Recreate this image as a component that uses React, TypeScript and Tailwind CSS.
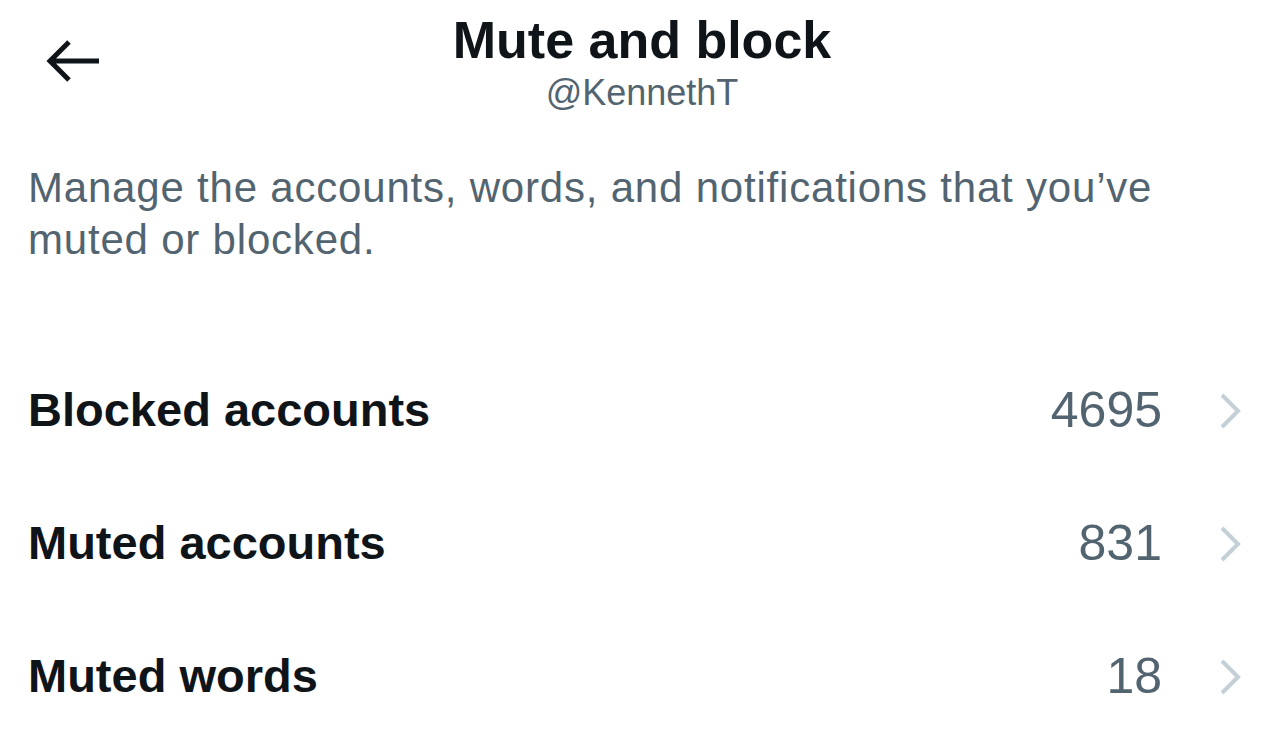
import React from 'react';

const rows = [
  { label: 'Blocked accounts', count: '4695' },
  { label: 'Muted accounts', count: '831' },
  { label: 'Muted words', count: '18' },
];

function BackArrow() {
  return (
    <svg width="56" height="48" viewBox="0 0 56 48" fill="none">
      <path
        d="M25 5 L6 24 L25 43 M6 24 H55"
        stroke="#0f1419"
        strokeWidth="5"
        strokeLinecap="butt"
        strokeLinejoin="miter"
      />
    </svg>
  );
}

function Chevron() {
  return (
    <svg width="26" height="40" viewBox="0 0 26 40" fill="none">
      <path d="M4 4 L20 20 L4 36" stroke="#c4cfd6" strokeWidth="4" />
    </svg>
  );
}

export default function App() {
  return (
    <div
      className="w-[1284px] h-[741px] bg-white overflow-hidden text-[#0f1419]"
      style={{ fontFamily: '"Liberation Sans", Arial, sans-serif' }}
    >
      {/* 헤더 */}
      <div className="relative flex flex-col items-center pt-[10px]">
        <div className="absolute left-[44px] top-[37px]">
          <BackArrow />
        </div>
        <h1 className="text-[52px] leading-[60px] font-bold">Mute and block</h1>
        <p className="text-[36px] leading-[46px] text-[#536471]">@KennethT</p>
      </div>

      {/* 설명 */}
      <p className="px-[28px] mt-[46px] text-[42px] leading-[52px] tracking-[0.8px] text-[#536471] max-w-[1220px]">
        Manage the accounts, words, and notifications that you’ve muted or blocked.
      </p>

      {/* 목록 */}
      <div className="mt-[78px]">
        {rows.map((row) => (
          <div key={row.label} className="flex items-center h-[133px] pl-[28px] pr-[40px]">
            <span className="flex-1 text-[47px] font-bold">{row.label}</span>
            <span className="text-[50px] text-[#536471]">{row.count}</span>
            <span className="ml-[56px] flex items-center">
              <Chevron />
            </span>
          </div>
        ))}
      </div>
    </div>
  );
}
